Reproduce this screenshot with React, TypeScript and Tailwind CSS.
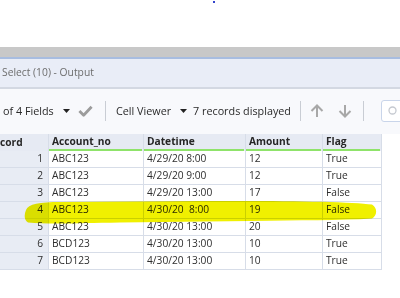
import React from "react";

const rows = [
  ["1", "ABC123", "4/29/20 8:00", "12", "True"],
  ["2", "ABC123", "4/29/20 9:00", "12", "True"],
  ["3", "ABC123", "4/29/20 13:00", "17", "False"],
  ["4", "ABC123", "4/30/20  8:00", "19", "False"],
  ["5", "ABC123", "4/30/20 13:00", "20", "False"],
  ["6", "BCD123", "4/30/20 13:00", "10", "True"],
  ["7", "BCD123", "4/30/20 13:00", "10", "True"],
];

function Caret() {
  return (
    <svg width="7" height="4" viewBox="0 0 7 4" className="shrink-0">
      <path d="M0 0 H7 L3.5 4 Z" fill="#222" />
    </svg>
  );
}

function Sep() {
  return <div className="w-px h-[20px] bg-[#c9cdd4] shrink-0" />;
}

export default function App() {
  return (
    <div
      className="relative w-[400px] h-[298px] bg-white overflow-hidden text-[#333]"
      style={{ fontFamily: '"Open Sans", "Noto Sans", sans-serif' }}
    >
      <div className="h-[47px] bg-white relative">
        <div className="absolute left-[213px] top-[1px] w-[2px] h-[2px] bg-[#3344cc]" />
      </div>
      <div className="h-[10px] bg-[#c8c8c8]" />
      <div className="h-[2px] bg-[#a8bde0]" />
      <div className="h-[30px] bg-[#e9edf7] border-b-2 border-[#d3d8e2] flex items-center pl-[2px] text-[10.3px] text-[#6d6d6d] whitespace-nowrap">
        Select (10) - Output
      </div>
      <div className="h-[44px] bg-[#f8f9fc] flex items-center text-[10.8px] text-[#2a2a2a] whitespace-nowrap overflow-hidden">
        <span className="ml-[3px] w-[54px] shrink-0">of 4 Fields</span>
        <span className="ml-[6px] shrink-0"><Caret /></span>
        <svg width="15" height="12" viewBox="0 0 16 12" className="ml-[8px] shrink-0">
          <path d="M1.5 6 L6 10.5 L14.5 1.5" fill="none" stroke="#9c9c9c" strokeWidth="3" strokeLinejoin="round" />
        </svg>
        <div className="ml-[12px] shrink-0"><Sep /></div>
        <span className="ml-[10px] w-[56px] shrink-0">Cell Viewer</span>
        <span className="ml-[8px] shrink-0"><Caret /></span>
        <span className="ml-[6px] w-[97px] shrink-0">7 records displayed</span>
        <div className="ml-[10px] shrink-0"><Sep /></div>
        <svg width="14" height="14" viewBox="0 0 14 14" className="ml-[9px] shrink-0">
          <path d="M7 13 V2 M1.5 7 L7 1.5 L12.5 7" fill="none" stroke="#a8a8a8" strokeWidth="2" />
        </svg>
        <svg width="14" height="14" viewBox="0 0 14 14" className="ml-[14px] shrink-0">
          <path d="M7 1 V12 M1.5 7 L7 12.5 L12.5 7" fill="none" stroke="#a8a8a8" strokeWidth="2" />
        </svg>
        <div className="ml-[11px] shrink-0"><Sep /></div>
        <div className="ml-[17px] w-[40px] h-[22px] shrink-0 rounded-[3px] border border-[#c9d5ea] bg-white flex items-center pl-[6px]">
          <svg width="10" height="10" viewBox="0 0 10 10">
            <circle cx="4.5" cy="4.5" r="3.5" fill="none" stroke="#c5c9d0" strokeWidth="1.3" />
          </svg>
        </div>
      </div>
      <div className="bg-[#f8f9fc] h-[1px]" />
      <div className="relative bg-white text-[10.2px] text-[#2e2e2e]">
        <div className="flex h-[17px] font-bold text-[10.2px] text-[#262626]">
          <div className="w-[49px] bg-[#e6eaf3] border-r border-[#d7dde8] flex items-center">
            <span>cord</span>
          </div>
          {[
            ["Account_no", "w-[95px]"],
            ["Datetime", "w-[102px]"],
            ["Amount", "w-[77px]"],
            ["Flag", "w-[59px]"],
          ].map(([t, w]) => (
            <div key={t} className={`${w} bg-[#e6eaf3] border-r border-[#d7dde8] flex flex-col`}>
              <div className="flex-1 flex items-center pl-[3px]">{t}</div>
              <div className="h-[2px] bg-[#8fe36a] mr-[1px]" />
            </div>
          ))}
        </div>
        {rows.map((r) => (
          <div key={r[0]} className="flex h-[17px]">
            <div className="w-[49px] bg-[#e8ecf4] border-r border-b border-[#d7dde8] flex items-center justify-end pr-[5px]">
              {r[0]}
            </div>
            <div className="w-[95px] border-r border-b border-[#d7dde8] flex items-center pl-[3px]">{r[1]}</div>
            <div className="w-[102px] border-r border-b border-[#d7dde8] flex items-center pl-[3px] whitespace-pre">{r[2]}</div>
            <div className="w-[77px] border-r border-b border-[#d7dde8] flex items-center pl-[3px]">{r[3]}</div>
            <div className="w-[59px] border-r border-b border-[#d7dde8] flex items-center pl-[3px]">{r[4]}</div>
          </div>
        ))}
      </div>
      <svg
        className="absolute left-0 top-0 pointer-events-none mix-blend-multiply"
        width="400"
        height="298"
        viewBox="0 0 400 298"
      >
        <path
          d="M26 210 C28 204 40 202 60 202 L200 201 C280 200.5 350 201.5 372 204.5 C378 208 377 216 372 218.5 C340 220.5 300 220 250 221 L120 222.5 C80 223 50 224.5 28 222.5 C24 220 24 215 26 210 Z"
          fill="#f0f000"
        />
      </svg>
    </div>
  );
}
